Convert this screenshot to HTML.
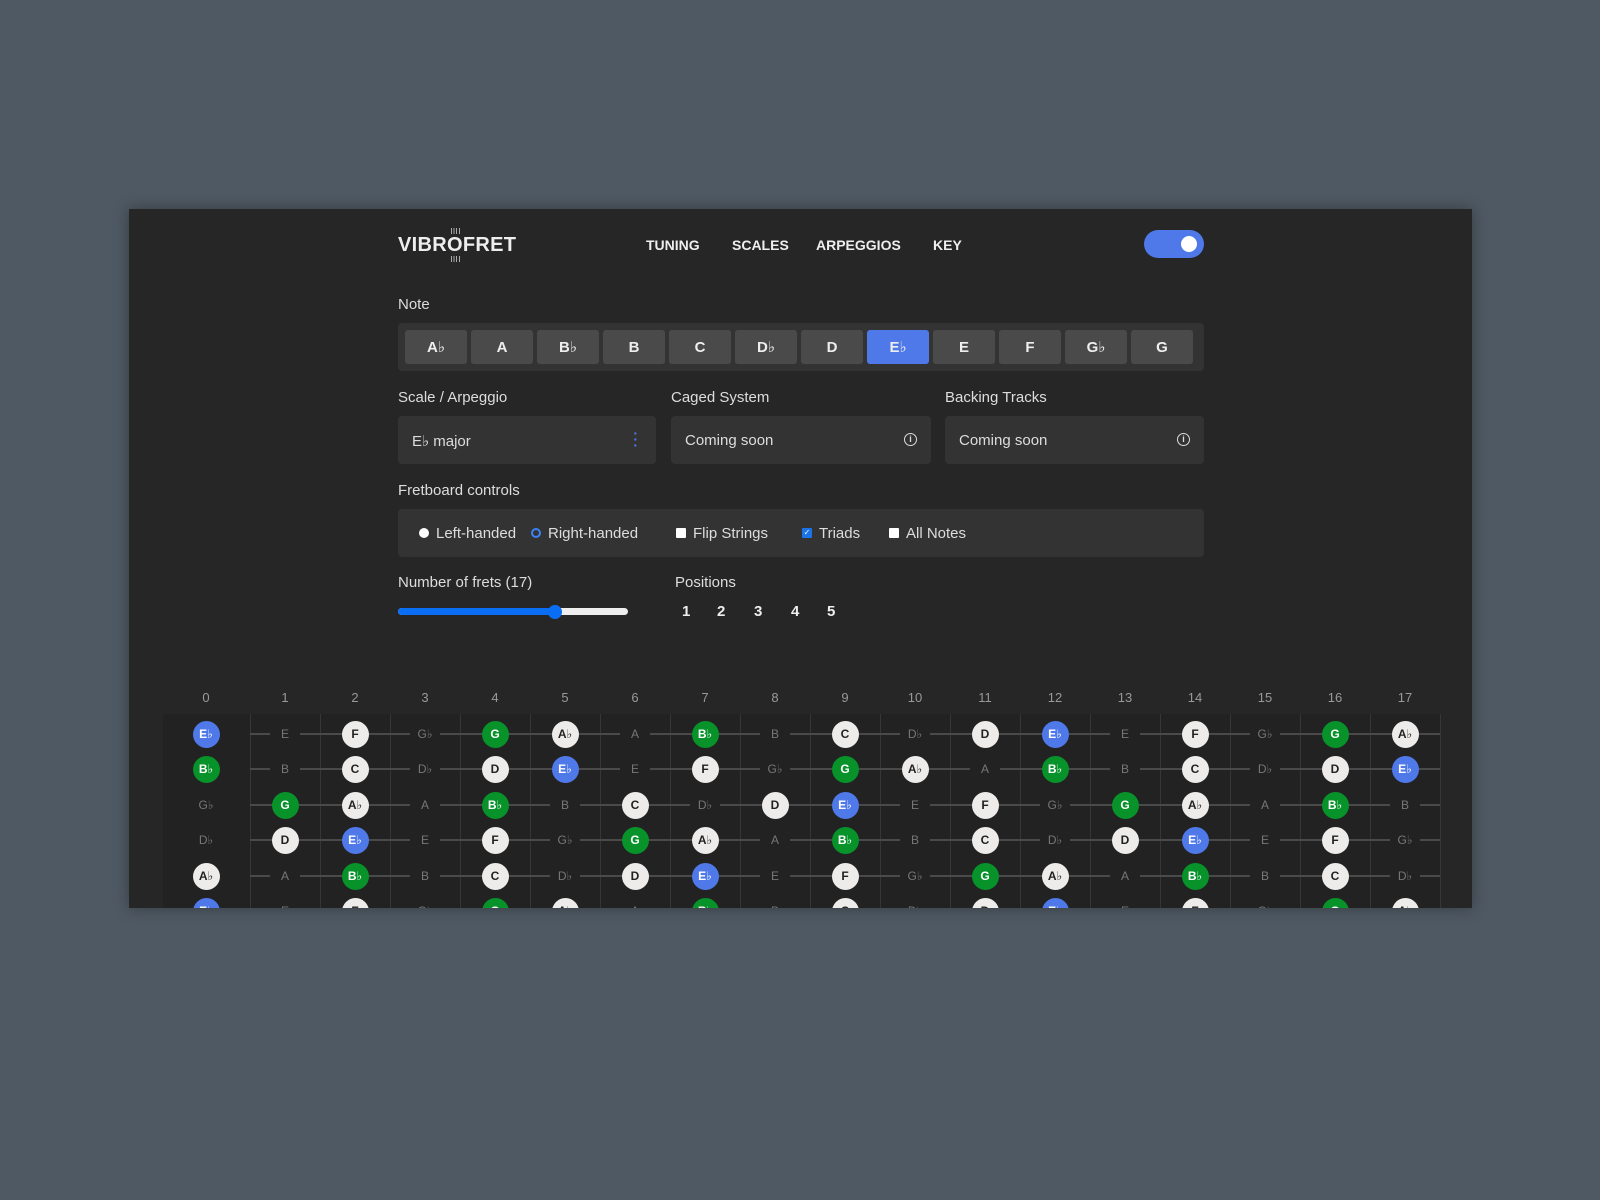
<!DOCTYPE html>
<html><head><meta charset="utf-8"><style>
*{box-sizing:border-box;margin:0;padding:0}
body{width:1600px;height:1200px;background:#4f5963;font-family:"Liberation Sans","DejaVu Sans",sans-serif;position:relative;overflow:hidden}
.panel{position:absolute;left:129px;top:209px;width:1343px;height:699px;background:#262626;box-shadow:0 0 14px rgba(0,0,0,.35);overflow:hidden}
.a{position:absolute}
.logo{left:269px;top:25px;font-weight:bold;font-size:20px;color:#eee;letter-spacing:0.3px}
.mk{position:absolute;left:50%;width:9px;margin-left:-4px;height:6px;background:repeating-linear-gradient(90deg,#aaa 0 1px,transparent 1px 2.6px)}
.nav{top:28px;font-weight:bold;font-size:14px;color:#eee}
.tog{left:1015px;top:21px;width:60px;height:28px;border-radius:14px;background:#4f78e8}
.tog:after{content:"";position:absolute;right:7px;top:6px;width:16px;height:16px;border-radius:50%;background:#fff}
.lbl{font-size:15px;color:#ddd}
.notes{left:269px;top:114px;width:806px;height:48px;background:#333;border-radius:4px;padding:7px 0 0 7px;display:flex;gap:4px}
.nb{width:62px;height:34px;background:#4a4a4a;border-radius:3px;color:#eee;font-weight:bold;font-size:15px;display:flex;align-items:center;justify-content:center}
.nb.on{background:#4f78e8}
.sel{top:207px;height:48px;background:#333;border-radius:4px;color:#ddd;font-size:15px;padding:16px 14px}
.info{position:absolute;right:14px;top:17px;width:13px;height:13px;border:1.5px solid #ddd;border-radius:50%;font-size:9px;line-height:10px;text-align:center;font-weight:bold;color:#ddd}
.ctrl{left:269px;top:300px;width:806px;height:48px;background:#333;border-radius:4px;font-size:15px;color:#ddd}
.ctrl span{position:absolute;top:16px}
.rb{position:absolute;top:19px;width:10px;height:10px;border-radius:50%;background:#fff}
.cb{position:absolute;top:19px;width:10px;height:10px;background:#fff;border-radius:1px}
.pos{top:394px;font-weight:bold;font-size:15px;color:#eee}
.fb{left:34px;top:505px;width:1277px;height:200px;background:#222}
.fl{position:absolute;top:505px;width:1px;height:200px;background:#363636}
.fn{position:absolute;top:481px;width:40px;margin-left:-20px;text-align:center;font-size:13px;color:#999}
.sl{position:absolute;left:121px;width:1190px;height:2px;background:#4a4a4a}
.row{position:absolute;left:42px;display:flex;height:30px;margin-top:-15px}
.row>i{width:70px;height:30px;display:flex;align-items:center;justify-content:center;font-style:normal}
.row>i:first-child{margin-right:9px}
.c{width:27px;height:27px;border-radius:50%;display:flex;align-items:center;justify-content:center;font-size:12px;font-weight:bold}
.w{background:#eeecea;color:#222}
.b{background:#4f78e8;color:#fff}
.g{background:#07922a;color:#fff}
.t{background:#222;color:#777;font-size:12px;font-weight:normal;width:30px;text-align:center;line-height:16px}
.row>i:first-child .t{background:transparent}
</style></head><body>
<div class="panel">
<div class="a logo">VIBR<span style="position:relative">O<span class="mk" style="top:-6px"></span><span class="mk" style="bottom:-6px"></span></span>FRET</div>
<div class="a nav" style="left:517px">TUNING</div>
<div class="a nav" style="left:603px">SCALES</div>
<div class="a nav" style="left:687px">ARPEGGIOS</div>
<div class="a nav" style="left:804px">KEY</div>
<div class="a tog"></div>
<div class="a lbl" style="left:269px;top:87px">Note</div>
<div class="a notes">
<div class="nb">A♭</div><div class="nb">A</div><div class="nb">B♭</div><div class="nb">B</div><div class="nb">C</div><div class="nb">D♭</div><div class="nb">D</div><div class="nb on">E♭</div><div class="nb">E</div><div class="nb">F</div><div class="nb">G♭</div><div class="nb">G</div>
</div>
<div class="a lbl" style="left:269px;top:180px">Scale / Arpeggio</div>
<div class="a lbl" style="left:542px;top:180px">Caged System</div>
<div class="a lbl" style="left:816px;top:180px">Backing Tracks</div>
<div class="a sel" style="left:269px;width:258px">E♭ major<span style="position:absolute;right:18px;top:14px;color:#4f78e8;font-size:14px;line-height:6px;font-weight:bold">·<br>·<br>·</span></div>
<div class="a sel" style="left:542px;width:260px">Coming soon<span class="info">i</span></div>
<div class="a sel" style="left:816px;width:259px">Coming soon<span class="info">i</span></div>
<div class="a lbl" style="left:269px;top:273px">Fretboard controls</div>
<div class="a ctrl">
<div class="rb" style="left:21px"></div><span style="left:38px">Left-handed</span>
<div class="rb" style="left:133px;background:none;border:2px solid #3b82f6"></div><span style="left:150px">Right-handed</span>
<div class="cb" style="left:278px"></div><span style="left:295px">Flip Strings</span>
<div class="cb" style="left:404px;background:#1a73e8;color:#fff;font-size:8px;line-height:10px;text-align:center">✓</div><span style="left:421px">Triads</span>
<div class="cb" style="left:491px"></div><span style="left:508px">All Notes</span>
</div>
<div class="a lbl" style="left:269px;top:365px">Number of frets (17)</div>
<div class="a lbl" style="left:546px;top:365px">Positions</div>
<div class="a" style="left:269px;top:399px;width:230px;height:7px;border-radius:4px;background:#eee"></div>
<div class="a" style="left:269px;top:399px;width:158px;height:7px;border-radius:4px;background:#0a6ef5"></div>
<div class="a" style="left:419px;top:396px;width:14px;height:14px;border-radius:50%;background:#0a6ef5"></div>
<div class="a pos" style="left:553px">1</div>
<div class="a pos" style="left:588px">2</div>
<div class="a pos" style="left:625px">3</div>
<div class="a pos" style="left:662px">4</div>
<div class="a pos" style="left:698px">5</div>

<div class="a fb"></div>
<div class="fl" style="left:121px"></div><div class="fl" style="left:191px"></div><div class="fl" style="left:261px"></div><div class="fl" style="left:331px"></div><div class="fl" style="left:401px"></div><div class="fl" style="left:471px"></div><div class="fl" style="left:541px"></div><div class="fl" style="left:611px"></div><div class="fl" style="left:681px"></div><div class="fl" style="left:751px"></div><div class="fl" style="left:821px"></div><div class="fl" style="left:891px"></div><div class="fl" style="left:961px"></div><div class="fl" style="left:1031px"></div><div class="fl" style="left:1101px"></div><div class="fl" style="left:1171px"></div><div class="fl" style="left:1241px"></div><div class="fl" style="left:1311px"></div>
<div class="fn" style="left:77px">0</div><div class="fn" style="left:156px">1</div><div class="fn" style="left:226px">2</div><div class="fn" style="left:296px">3</div><div class="fn" style="left:366px">4</div><div class="fn" style="left:436px">5</div><div class="fn" style="left:506px">6</div><div class="fn" style="left:576px">7</div><div class="fn" style="left:646px">8</div><div class="fn" style="left:716px">9</div><div class="fn" style="left:786px">10</div><div class="fn" style="left:856px">11</div><div class="fn" style="left:926px">12</div><div class="fn" style="left:996px">13</div><div class="fn" style="left:1066px">14</div><div class="fn" style="left:1136px">15</div><div class="fn" style="left:1206px">16</div><div class="fn" style="left:1276px">17</div>
<div class="sl" style="top:524px"></div><div class="sl" style="top:559px"></div><div class="sl" style="top:595px"></div><div class="sl" style="top:630px"></div><div class="sl" style="top:666px"></div><div class="sl" style="top:701px"></div>

<div class="row" style="top:525px"><i><b class="c b">E♭</b></i><i><b class="t">E</b></i><i><b class="c w">F</b></i><i><b class="t">G♭</b></i><i><b class="c g">G</b></i><i><b class="c w">A♭</b></i><i><b class="t">A</b></i><i><b class="c g">B♭</b></i><i><b class="t">B</b></i><i><b class="c w">C</b></i><i><b class="t">D♭</b></i><i><b class="c w">D</b></i><i><b class="c b">E♭</b></i><i><b class="t">E</b></i><i><b class="c w">F</b></i><i><b class="t">G♭</b></i><i><b class="c g">G</b></i><i><b class="c w">A♭</b></i></div>
<div class="row" style="top:560px"><i><b class="c g">B♭</b></i><i><b class="t">B</b></i><i><b class="c w">C</b></i><i><b class="t">D♭</b></i><i><b class="c w">D</b></i><i><b class="c b">E♭</b></i><i><b class="t">E</b></i><i><b class="c w">F</b></i><i><b class="t">G♭</b></i><i><b class="c g">G</b></i><i><b class="c w">A♭</b></i><i><b class="t">A</b></i><i><b class="c g">B♭</b></i><i><b class="t">B</b></i><i><b class="c w">C</b></i><i><b class="t">D♭</b></i><i><b class="c w">D</b></i><i><b class="c b">E♭</b></i></div>
<div class="row" style="top:596px"><i><b class="t">G♭</b></i><i><b class="c g">G</b></i><i><b class="c w">A♭</b></i><i><b class="t">A</b></i><i><b class="c g">B♭</b></i><i><b class="t">B</b></i><i><b class="c w">C</b></i><i><b class="t">D♭</b></i><i><b class="c w">D</b></i><i><b class="c b">E♭</b></i><i><b class="t">E</b></i><i><b class="c w">F</b></i><i><b class="t">G♭</b></i><i><b class="c g">G</b></i><i><b class="c w">A♭</b></i><i><b class="t">A</b></i><i><b class="c g">B♭</b></i><i><b class="t">B</b></i></div>
<div class="row" style="top:631px"><i><b class="t">D♭</b></i><i><b class="c w">D</b></i><i><b class="c b">E♭</b></i><i><b class="t">E</b></i><i><b class="c w">F</b></i><i><b class="t">G♭</b></i><i><b class="c g">G</b></i><i><b class="c w">A♭</b></i><i><b class="t">A</b></i><i><b class="c g">B♭</b></i><i><b class="t">B</b></i><i><b class="c w">C</b></i><i><b class="t">D♭</b></i><i><b class="c w">D</b></i><i><b class="c b">E♭</b></i><i><b class="t">E</b></i><i><b class="c w">F</b></i><i><b class="t">G♭</b></i></div>
<div class="row" style="top:667px"><i><b class="c w">A♭</b></i><i><b class="t">A</b></i><i><b class="c g">B♭</b></i><i><b class="t">B</b></i><i><b class="c w">C</b></i><i><b class="t">D♭</b></i><i><b class="c w">D</b></i><i><b class="c b">E♭</b></i><i><b class="t">E</b></i><i><b class="c w">F</b></i><i><b class="t">G♭</b></i><i><b class="c g">G</b></i><i><b class="c w">A♭</b></i><i><b class="t">A</b></i><i><b class="c g">B♭</b></i><i><b class="t">B</b></i><i><b class="c w">C</b></i><i><b class="t">D♭</b></i></div>
<div class="row" style="top:702px"><i><b class="c b">E♭</b></i><i><b class="t">E</b></i><i><b class="c w">F</b></i><i><b class="t">G♭</b></i><i><b class="c g">G</b></i><i><b class="c w">A♭</b></i><i><b class="t">A</b></i><i><b class="c g">B♭</b></i><i><b class="t">B</b></i><i><b class="c w">C</b></i><i><b class="t">D♭</b></i><i><b class="c w">D</b></i><i><b class="c b">E♭</b></i><i><b class="t">E</b></i><i><b class="c w">F</b></i><i><b class="t">G♭</b></i><i><b class="c g">G</b></i><i><b class="c w">A♭</b></i></div>
</div>
</body></html>
